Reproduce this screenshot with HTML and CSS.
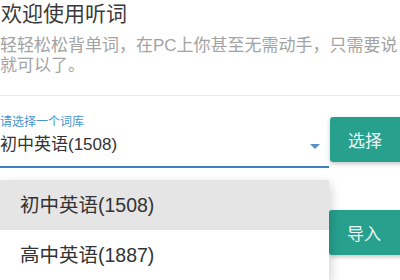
FILE: index.html
```html
<!DOCTYPE html>
<html lang="zh">
<head>
<meta charset="utf-8">
<link rel="stylesheet" href="styles.css">
</head>
<body>
<div class="page">
  <header class="intro">
    <h1 class="title">欢迎使用听词</h1>
    <p class="subtitle"><span class="line">轻轻松松背单词，在PC上你甚至无需动手，只需要说</span><span class="line">就可以了。</span></p>
  </header>
  <section class="panel">
    <div class="field">
      <div class="label">请选择一个词库</div>
      <div class="value-row">
        <span class="value">初中英语(1508)</span>
        <span class="arrow"></span>
      </div>
      <ul class="menu">
        <li class="item active">初中英语(1508)</li>
        <li class="item">高中英语(1887)</li>
      </ul>
    </div>
    <div class="actions">
      <button class="btn btn-select">选择</button>
      <button class="btn btn-import">导入</button>
    </div>
  </section>
</div>
</body>
</html>
```
FILE: styles.css
```css
html, body {
  margin: 0;
  padding: 0;
  background: #ffffff;
}
body {
  width: 400px;
  height: 280px;
  overflow: hidden;
  font-family: "Liberation Sans", "Noto Sans CJK SC", sans-serif;
}
.page {
  width: 400px;
}
.intro {
  padding-left: 1px;
  padding-bottom: 19px;
  border-bottom: 1px solid #e9e9e9;
}
.title {
  margin: 0;
  font-size: 21px;
  line-height: 28px;
  font-weight: normal;
  color: #3a3a3a;
}
.subtitle {
  margin: 8px 0 0 -1px;
  font-size: 17px;
  line-height: 20px;
  color: #a3a3a3;
}
.line {
  display: block;
  white-space: nowrap;
}
.panel {
  display: flex;
  align-items: flex-start;
}
.field {
  position: relative;
  flex: 0 0 329px;
  width: 329px;
  height: 184px;
  padding-top: 18px;
  box-sizing: border-box;
}
.label {
  font-size: 12px;
  line-height: 16px;
  color: #4595d3;
}
.value-row {
  display: flex;
  justify-content: space-between;
  align-items: flex-start;
  margin-top: 3px;
  height: 33px;
  border-bottom: 2px solid #3f80c4;
}
.value {
  font-size: 17px;
  line-height: 24px;
  color: #333333;
}
.arrow {
  margin-top: 11px;
  margin-right: 9px;
  width: 0;
  height: 0;
  border-left: 5px solid transparent;
  border-right: 5px solid transparent;
  border-top: 5px solid #5b8fc8;
}
.menu {
  position: absolute;
  left: 0;
  top: 84px;
  width: 329px;
  margin: 0;
  padding: 0;
  list-style: none;
  background: #ffffff;
  box-shadow: 2px 4px 10px rgba(0, 0, 0, 0.18);
}
.item {
  height: 50px;
  line-height: 50px;
  padding-left: 20px;
  font-size: 19.5px;
  color: #333333;
}
.item.active {
  background: #e5e5e5;
}
.actions {
  display: flex;
  flex-direction: column;
  flex: 0 0 90px;
  padding-top: 21px;
  margin-left: 1px;
  gap: 48px;
}
.btn {
  width: 90px;
  height: 45px;
  border: none;
  border-radius: 3px;
  background: #27a08e;
  color: #eef7f5;
  font-family: "Noto Sans CJK SC", sans-serif;
  font-size: 17px;
  text-align: left;
  padding-left: 18px;
  box-shadow: 0 2px 4px rgba(0, 0, 0, 0.22);
}
.btn-import {
  margin-left: -1px;
}
```
